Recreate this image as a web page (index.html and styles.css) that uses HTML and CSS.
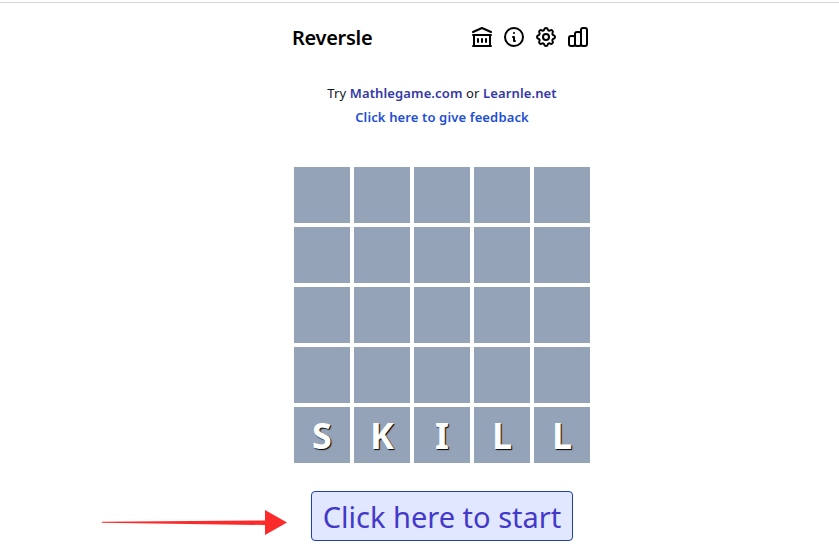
FILE: index.html
```html
<!DOCTYPE html>
<html lang="en">
<head>
    <meta charset="UTF-8">
    <meta name="viewport" content="width=device-width, initial-scale=1.0">
    <title>Reversle</title>
    <link rel="stylesheet" href="styles.css">
</head>
<body>

    <div class="page">
        <div class="navbar">
            <h1 class="title">Reversle</h1>
            <div class="nav-icons">
                <svg class="icon" viewBox="0 0 24 24"><path d="M8 14v3m4-3v3m4-3v3M3 21h18M3 10h18M3 7l9-4 9 4M4 10h16v11H4V10z"/></svg>
                <svg class="icon" viewBox="0 0 24 24"><path d="M13 16h-1v-4h-1m1-4h.01M21 12a9 9 0 11-18 0 9 9 0 0118 0z"/></svg>
                <svg class="icon" viewBox="0 0 24 24"><path d="M10.325 4.317c.426-1.756 2.924-1.756 3.35 0a1.724 1.724 0 002.573 1.066c1.543-.94 3.31.826 2.37 2.37a1.724 1.724 0 001.065 2.572c1.756.426 1.756 2.924 0 3.35a1.724 1.724 0 00-1.066 2.573c.94 1.543-.826 3.31-2.37 2.37a1.724 1.724 0 00-2.572 1.065c-.426 1.756-2.924 1.756-3.35 0a1.724 1.724 0 00-2.573-1.066c-1.543.94-3.31-.826-2.37-2.37a1.724 1.724 0 00-1.065-2.572c-1.756-.426-1.756-2.924 0-3.35a1.724 1.724 0 001.066-2.573c-.94-1.543.826-3.31 2.37-2.37.996.608 2.296.07 2.572-1.065z"/><path d="M15 12a3 3 0 11-6 0 3 3 0 016 0z"/></svg>
                <svg class="icon" viewBox="0 0 24 24"><path d="M9 19v-6a2 2 0 00-2-2H5a2 2 0 00-2 2v6a2 2 0 002 2h2a2 2 0 002-2zm0 0V9a2 2 0 012-2h2a2 2 0 012 2v10m-6 0a2 2 0 002 2h2a2 2 0 002-2m0 0V5a2 2 0 012-2h2a2 2 0 012 2v14a2 2 0 01-2 2h-2a2 2 0 01-2-2z"/></svg>
            </div>
        </div>

        <div class="promo">
            <p>Try <a href="#" class="link-dark">Mathlegame.com</a> or <a href="#" class="link-dark">Learnle.net</a></p>
            <p><a href="#" class="link-blue">Click here to give feedback</a></p>
        </div>

        <div class="grid">
            <div class="tile"></div><div class="tile"></div><div class="tile"></div><div class="tile"></div><div class="tile"></div>
            <div class="tile"></div><div class="tile"></div><div class="tile"></div><div class="tile"></div><div class="tile"></div>
            <div class="tile"></div><div class="tile"></div><div class="tile"></div><div class="tile"></div><div class="tile"></div>
            <div class="tile"></div><div class="tile"></div><div class="tile"></div><div class="tile"></div><div class="tile"></div>
            <div class="tile">S</div><div class="tile">K</div><div class="tile">I</div><div class="tile">L</div><div class="tile">L</div>
        </div>

        <button class="start-btn">Click here to start</button>
    </div>

    <svg class="arrow" viewBox="0 0 186 38"><path d="M0 16.800 163 15.500V5l22 12.500L163 30V20L0 17.800z"/></svg>

</body>
</html>
```

FILE: styles.css
```css
body {
    margin: 2px 0 0;
    padding: 0;
    font-family: "Noto Sans", sans-serif;
    background: #fff;
    color: #000;
    border-top: 1px solid #d4d4d4;
}

.page {
    display: flex;
    flex-direction: column;
    align-items: center;
    width: 839px;
    height: 548px;
    box-sizing: border-box;
    padding-left: 45px;
    overflow: hidden;
}

.navbar {
    display: flex;
    justify-content: space-between;
    align-items: center;
    width: 300px;
    height: 68px;
    box-sizing: border-box;
    padding-right: 2px;
}

.title {
    margin: 2px 0 0;
    font-size: 20px;
    line-height: 28px;
    font-weight: 600;
    letter-spacing: -0.3px;
}

.nav-icons {
    display: flex;
    gap: 8px;
}

.icon {
    width: 24px;
    height: 24px;
    fill: none;
    stroke: #000;
    stroke-width: 2;
    stroke-linecap: round;
    stroke-linejoin: round;
}

.promo {
    margin-top: 10px;
    text-align: center;
    font-size: 13px;
    line-height: 24px;
    letter-spacing: 0.13px;
    color: #111827;
}

.promo p {
    margin: 0;
}

.promo a {
    font-weight: 600;
    text-decoration: none;
}

.link-dark {
    color: #3338a8;
}

.link-blue {
    color: #1d4ed8;
}

.grid {
    display: grid;
    grid-template-columns: repeat(5, 56px);
    grid-auto-rows: 56px;
    gap: 4px;
    margin-top: 38px;
}

.tile {
    display: flex;
    justify-content: center;
    align-items: center;
    background: #94a3b8;
    color: #fff;
    font-size: 36px;
    font-weight: 700;
    text-shadow: 1px 1px 1px #000;
}

.start-btn {
    margin-top: 28px;
    width: 262px;
    height: 50px;
    box-sizing: border-box;
    padding: 0;
    border: 1px solid #1e40af;
    border-radius: 4px;
    background: #e0e7ff;
    color: #4338ca;
    font-family: inherit;
    font-size: 29px;
    cursor: pointer;
}

/* annotation drawn over the screenshot */
.arrow {
    position: absolute;
    left: 102px;
    top: 505px;
    width: 186px;
    height: 38px;
    fill: #fb2b2b;
}
```
